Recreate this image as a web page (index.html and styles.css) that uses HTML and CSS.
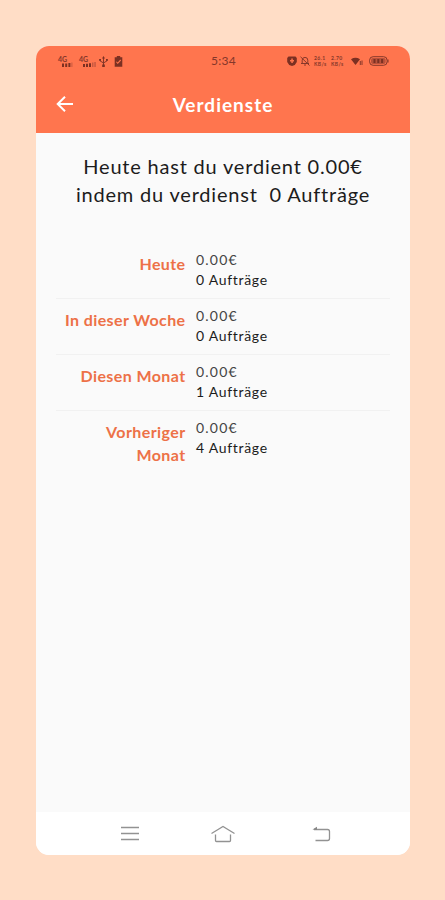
FILE: index.html
```
<!DOCTYPE html>
<html lang="de">
<head>
    <meta charset="UTF-8">
    <meta name="viewport" content="width=device-width, initial-scale=1.0">
    <title>Verdienste</title>
    <link rel="stylesheet" href="styles.css">
</head>
<body>

    <div class="phone">
        <header class="header">
            <div class="status-bar">
                <div class="status-left">
                    <div class="signal">
                        <span class="signal-label">4G</span>
                        <svg class="signal-bars" width="11" height="5" viewBox="0 0 11 5">
                            <path d="M0 1.5h2V5H0zM3.2 1.5h2V5h-2zM6.4 1h2v4h-2z"/>
                            <path class="faint" d="M9.4 0.5h1V5h-1z"/>
                        </svg>
                    </div>
                    <div class="signal wide">
                        <span class="signal-label">4G</span>
                        <svg class="signal-bars" width="13" height="5" viewBox="0 0 13 5">
                            <path d="M0 2h2v3H0zM3 1.7h2V5H3zM6 1.2h2V5H6z"/>
                            <path class="faint" d="M9 0.5h1.5V5H9zM11.3 0h1.5v5h-1.5z"/>
                        </svg>
                    </div>
                    <svg class="usb" width="9" height="11" viewBox="0 0 9 11">
                        <path class="line" d="M4.5 1v9M1 3.5v1.3l3.5 2.2L8 4.8V3.5"/>
                        <path d="M4.5 0L3 2.4h3zM3.2 8.6h2.6V11H3.2zM0.2 3h1.8v1.8H0.2zM7 3h1.8v1.8H7z"/>
                    </svg>
                    <svg width="9" height="11" viewBox="0 0 9 11">
                        <path fill-rule="evenodd" d="M2.8 0h3.4v1.2h2.1v9.5H0.7V1.2h2.1zM2 6l1.7 2 3.4-3.6-.8-.8-2.6 2.8-.9-1z"/>
                    </svg>
                </div>
                <div class="time">5:34</div>
                <div class="status-right">
                    <svg class="alarm" width="10" height="10" viewBox="0 0 10 10">
                        <path fill-rule="evenodd" d="M1.5 0.4h7L9.8 2v4L7.8 9 5 9.9 2.2 9 .2 6V2zM4.3 2.5v1.4H3v1.7h1.3V7h1.5V5.6H7V3.9H5.8V2.5z"/>
                    </svg>
                    <svg class="mute" width="10" height="10" viewBox="0 0 10 10">
                        <path class="line" d="M2.2 7.5V4.2a2.8 2.8 0 0 1 5.6 0v3.3M1 7.5h8M4 9h2M.5.8l9 8.7"/>
                    </svg>
                    <div class="net">
                        <span>26.1</span>
                        <span>KB/s</span>
                    </div>
                    <div class="net second">
                        <span>2.70</span>
                        <span>KB/s</span>
                    </div>
                    <svg class="wifi" width="12" height="9" viewBox="0 0 12 9">
                        <path d="M0 2.2Q4.5-.7 9 2.2L4.5 8z"/>
                        <path class="line" d="M9.3 4v4M11 3.5V8"/>
                    </svg>
                    <svg width="20" height="10" viewBox="0 0 20 10">
                        <rect class="line" x="0.6" y="0.7" width="17.5" height="8.6" rx="3.5"/>
                        <rect class="charge" x="2" y="2" width="14.7" height="6" rx="2"/>
                        <path d="M4.5 3h2v4h-2zM8.3 3h2v4h-2zM12.1 3h2v4h-2zM18.5 3.5h1v3h-1z"/>
                    </svg>
                </div>
            </div>
            <div class="title-bar">
                <svg class="back" width="18" height="18" viewBox="0 0 18 18">
                    <path d="M17 9H2M9 1.7L1.7 9L9 16.3"/>
                </svg>
                <h1>Verdienste</h1>
            </div>
        </header>

        <main class="content">
            <div class="summary">
                <p>Heute hast du verdient 0.00€</p>
                <p>indem du verdienst&nbsp; 0 Aufträge</p>
            </div>

            <div class="row">
                <div class="label">Heute</div>
                <div class="value">
                    <div class="amount">0.00€</div>
                    <div>0 Aufträge</div>
                </div>
            </div>
            <div class="row">
                <div class="label">In dieser Woche</div>
                <div class="value">
                    <div class="amount">0.00€</div>
                    <div>0 Aufträge</div>
                </div>
            </div>
            <div class="row">
                <div class="label">Diesen Monat</div>
                <div class="value">
                    <div class="amount">0.00€</div>
                    <div>1 Aufträge</div>
                </div>
            </div>
            <div class="row">
                <div class="label">Vorheriger<br>Monat</div>
                <div class="value">
                    <div class="amount">0.00€</div>
                    <div>4 Aufträge</div>
                </div>
            </div>
        </main>

        <nav class="nav-bar">
            <svg width="18" height="16" viewBox="0 0 18 16">
                <path d="M0 1.5h18M0 7.5h18M0 13.5h18"/>
            </svg>
            <svg width="26" height="18" viewBox="0 0 26 18">
                <path d="M1.5 8.5L13 1.5L24.5 8.5M5.5 9.5V15.5Q5.5 16.5 6.5 16.5H19.5Q20.5 16.5 20.5 15.5V9.5"/>
            </svg>
            <svg width="19" height="16" viewBox="0 0 19 16">
                <path d="M2 3.5H15.5Q17.5 3.5 17.5 5.5V12.5Q17.5 14.5 15.5 14.5H3.5"/>
                <path class="arrow-head" d="M0.5 3.5L5 0.7V4z"/>
            </svg>
        </nav>
    </div>

</body>
</html>
```

FILE: styles.css
```
* {
    box-sizing: border-box;
}
body {
    margin: 0;
    padding: 46px 35px 45px 36px;
    height: 900px;
    background-color: #ffddc6;
    font-family: Lato, "Liberation Sans", sans-serif;
    color: #1c1c1c;
}
.phone {
    display: flex;
    flex-direction: column;
    height: 809px;
    border-radius: 13px;
    overflow: hidden;
    background-color: #fafafa;
}
.header {
    height: 87px;
    background-color: #ff754e;
}
.status-bar {
    display: grid;
    grid-template-columns: 1fr auto 1fr;
    align-items: center;
    height: 30px;
    padding: 0 21px 0 22px;
    color: #85372a;
}
.status-bar svg {
    fill: #7b3022;
}
.status-bar .line {
    fill: none;
    stroke: #86382a;
    stroke-width: 1;
}
.status-bar .faint {
    fill: #c85940;
}
.status-bar .charge {
    fill: #b9523a;
}
.status-left,
.status-right {
    display: flex;
    align-items: center;
}
.status-right {
    justify-content: flex-end;
}
.signal {
    display: flex;
    flex-direction: column;
    width: 15px;
    margin-right: 6px;
}
.signal.wide {
    width: 17px;
    margin-right: 3px;
}
.signal-label {
    font-size: 7px;
    line-height: 6px;
    font-weight: bold;
}
.signal-bars {
    align-self: flex-end;
}
.usb {
    margin-right: 6px;
}
.time {
    font-size: 12px;
    line-height: 14px;
    letter-spacing: 0.3px;
}
.alarm {
    margin-right: 3px;
}
.mute {
    margin-right: 4px;
}
.net {
    display: flex;
    flex-direction: column;
    width: 13px;
    margin-right: 4px;
    font-size: 5px;
    line-height: 6px;
    letter-spacing: 0.4px;
    font-weight: bold;
}
.net.second {
    margin-right: 7px;
}
.wifi {
    margin-right: 6px;
}
.title-bar {
    display: grid;
    grid-template-columns: 18px 1fr 18px;
    align-items: center;
    height: 56px;
    padding: 0 20px;
}
.back {
    fill: none;
    stroke: #fff;
    stroke-width: 2;
}
h1 {
    margin: 0;
    padding-top: 1px;
    color: #fff;
    font-size: 19px;
    line-height: 24px;
    letter-spacing: 1px;
    text-align: center;
}
.content {
    flex: 1;
    padding: 19px 20px 0;
}
.summary {
    height: 91px;
    font-size: 20px;
    line-height: 28px;
    letter-spacing: 0.8px;
    text-align: center;
    white-space: nowrap;
}
.summary p {
    margin: 0;
}
.row {
    display: grid;
    grid-template-columns: 129.5px 1fr;
    gap: 10.5px;
    height: 56px;
    padding-top: 7px;
    border-bottom: 1px solid #f1f1f1;
}
.row:last-child {
    height: auto;
    border-bottom: none;
}
.label {
    padding-top: 2px;
    color: #ed7147;
    font-size: 16px;
    font-weight: bold;
    line-height: 23px;
    letter-spacing: 0.4px;
    text-align: right;
}
.value {
    font-size: 14px;
    line-height: 20px;
    letter-spacing: 0.7px;
}
.amount {
    color: #444;
    letter-spacing: 1.2px;
}
.nav-bar {
    display: grid;
    grid-template-columns: 89px 102px 1fr;
    align-items: center;
    height: 43px;
    padding-left: 85px;
    background-color: #fff;
}
.nav-bar svg {
    fill: none;
    stroke: #929292;
    stroke-width: 1.3;
}
.nav-bar .arrow-head {
    fill: #888;
    stroke: none;
}
```
